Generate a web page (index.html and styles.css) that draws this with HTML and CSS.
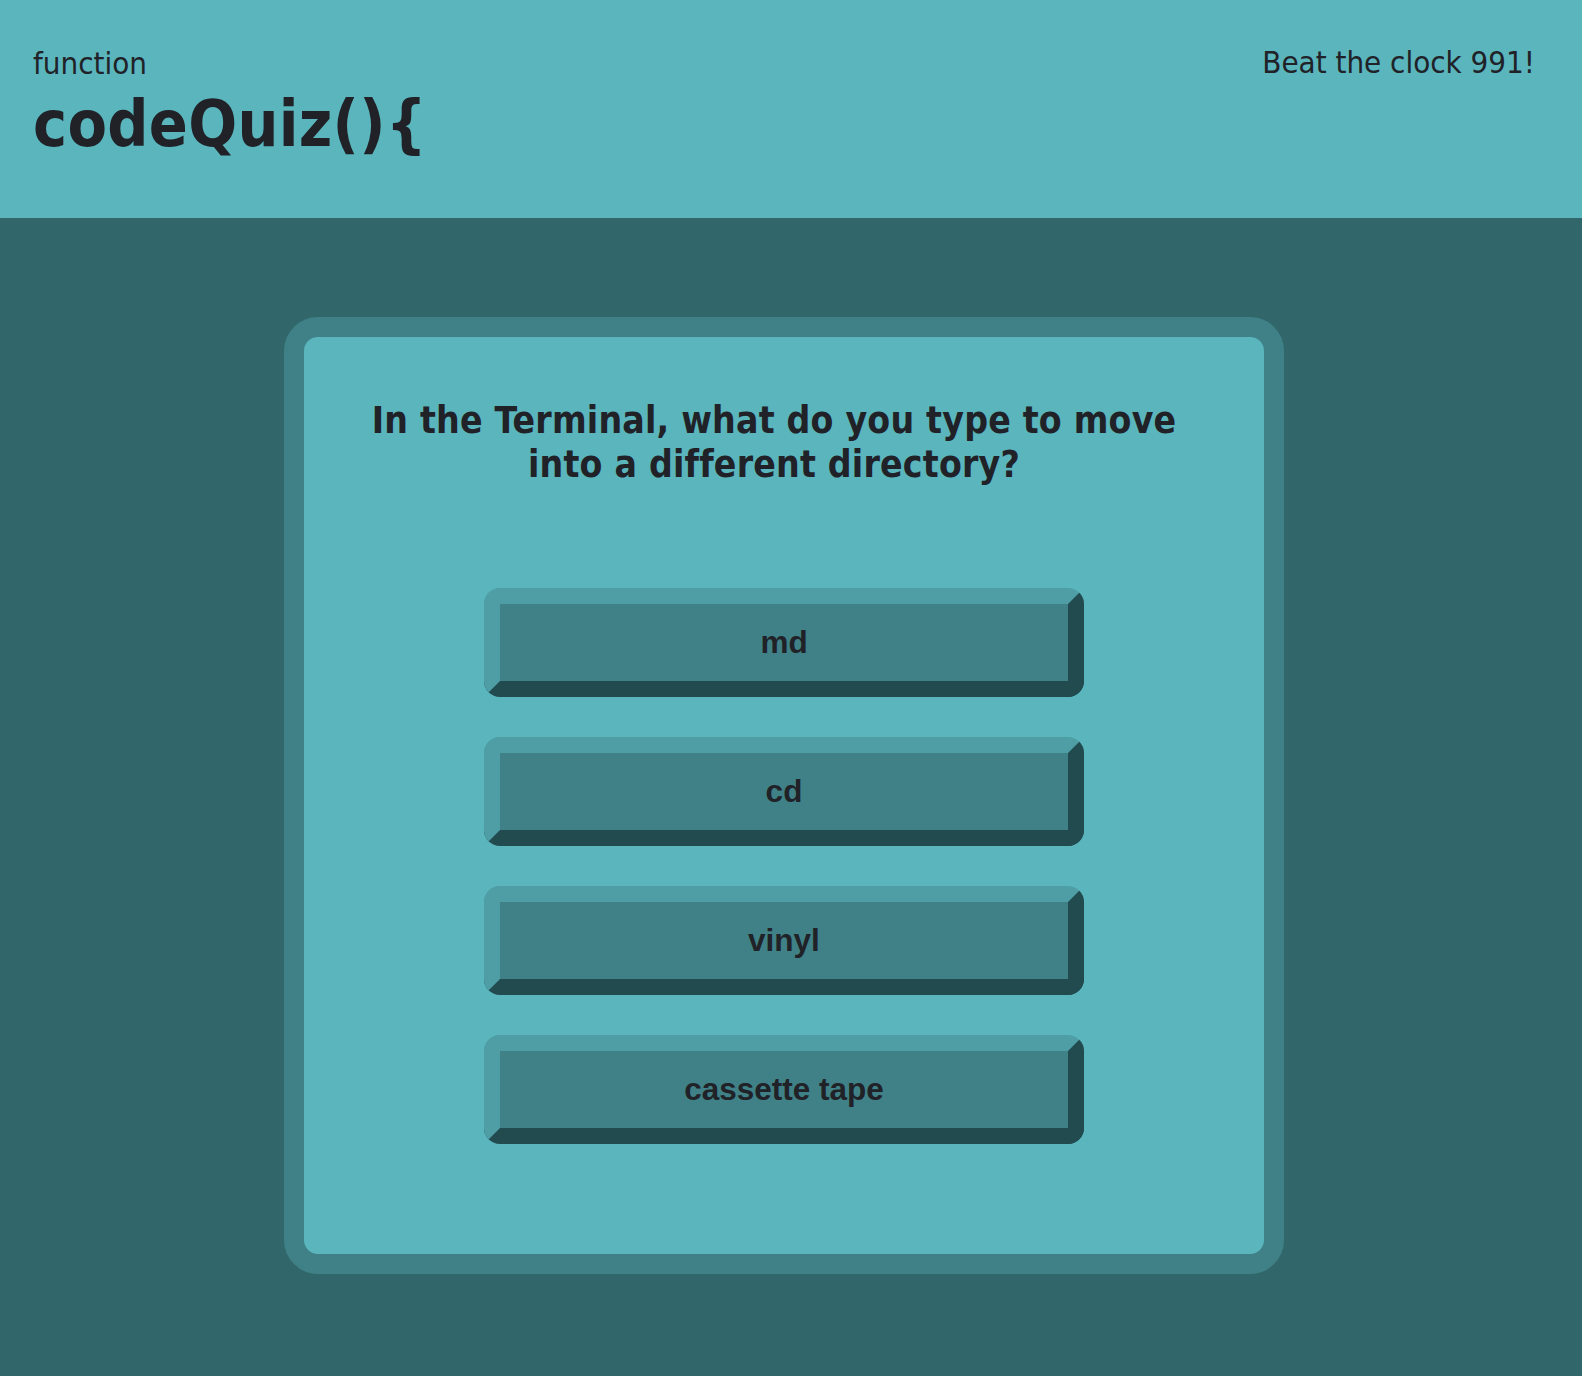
FILE: index.html
```html
<!DOCTYPE html>
<html lang="en">
<head>
<meta charset="utf-8">
<title>codeQuiz</title>
<link rel="stylesheet" href="styles.css">
</head>
<body>
<header class="top">
  <div class="brand">
    <div class="brand-kw">function</div>
    <div class="brand-name">codeQuiz(){</div>
  </div>
  <div class="timer">Beat the clock 991!</div>
</header>
<main class="stage">
  <section class="card">
    <h2 class="question">In the Terminal, what do you type to move into a different directory?</h2>
    <div class="answers">
      <button class="answer">md</button>
      <button class="answer">cd</button>
      <button class="answer">vinyl</button>
      <button class="answer">cassette tape</button>
    </div>
  </section>
</main>
</body>
</html>
```

FILE: styles.css
```css
* { box-sizing: border-box; }
html, body { margin: 0; padding: 0; }
body {
  background: #31666b;
  color: #202228;
  font-family: "DejaVu Sans Condensed", "DejaVu Sans", sans-serif;
  font-stretch: condensed;
  min-height: 1376px;
}
.top {
  background: #5ab5bd;
  height: 218px;
  display: flex;
  justify-content: space-between;
  align-items: flex-start;
  padding: 43px 47px 0 33px;
}
.brand-kw {
  font-size: 31px;
  line-height: 40px;
}
.brand-name {
  font-size: 64px;
  line-height: 72px;
  font-weight: bold;
  letter-spacing: 0.3px;
  margin-top: 5px;
}
.timer {
  font-size: 31px;
  line-height: 40px;
  margin-top: -1px;
}
.stage {
  padding-top: 99px;
  padding-bottom: 102px;
}
.card {
  width: 1000px;
  margin-left: 284px;
  background: #5ab5bd;
  border: 20px solid #3f8186;
  border-radius: 34px;
  padding: 62px 50px 110px;
}
.question {
  margin: 0;
  padding-right: 20px;
  text-align: center;
  font-size: 37px;
  line-height: 44px;
  letter-spacing: 0.2px;
  font-weight: bold;
}
.answers {
  margin-top: 101px;
  display: flex;
  flex-direction: column;
  align-items: center;
  gap: 40px;
}
.answer {
  width: 600px;
  height: 109px;
  background: #3f8186;
  border: 16px solid;
  border-color: #4f9ea5 #224b50 #224b50 #4f9ea5;
  border-radius: 16px;
  font-family: "Liberation Sans", Arial, sans-serif;
  font-weight: bold;
  font-size: 31.5px;
  color: #202228;
  padding: 0;
  cursor: pointer;
}
```
